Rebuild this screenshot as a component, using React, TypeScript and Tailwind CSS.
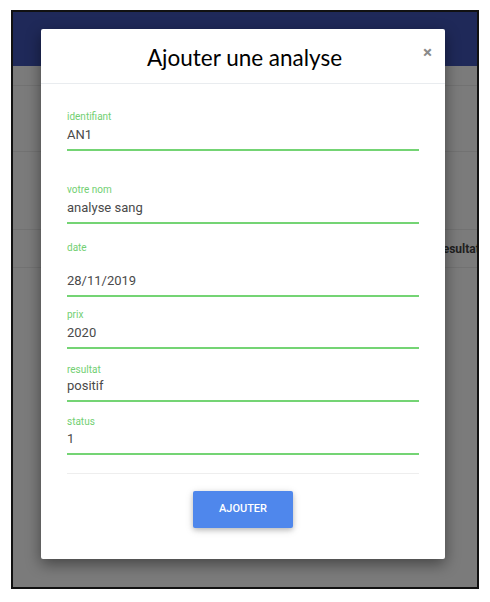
import React from 'react';

type FieldProps = {
    label: string;
    value: string;
    top: string;
    gap: string;
};

function Field({ label, value, top, gap }: FieldProps) {
    return (
        <div className={top}>
            <div className="text-[10px] leading-[12px] text-[#72cf72]">{label}</div>
            <div className={`${gap} text-[13px] leading-[18px] text-[#4a4a4a] pb-[5px] border-b-2 border-[#74d474]`}>
                {value}
            </div>
        </div>
    );
}

export default function App() {
    return (
        <div className="relative w-[490px] h-[602px] bg-white font-['Roboto',sans-serif]">
            {/* page behind the overlay */}
            <div className="absolute left-[11px] top-[10px] w-[468px] h-[579px] border-2 border-[#111] bg-[#7b7b7b] overflow-hidden">
                <div className="h-[54px] bg-[#1f2959]" />
                <div className="h-[20px] border-b border-[#727272]" />
                <div className="h-[66px] border-b border-[#727272]" />
                <div className="h-[78px] border-b border-[#727272]" />
                <div className="h-[38px] border-b border-[#727272] flex items-center pl-[422px] whitespace-nowrap text-[12px] font-bold text-[#1f1f1f]">
                    Resultat
                </div>
            </div>

            {/* modal */}
            <div className="absolute left-[41px] top-[29px] w-[404px] h-[530px] bg-white rounded-[2px] shadow-[0_5px_15px_rgba(0,0,0,0.45)]">
                <div className="relative h-[55px] border-b border-[#e9ecef] flex items-center justify-center">
                    <h2 className="text-[22.5px] text-black font-['Lato',sans-serif] pt-[3px] pl-[3px]">Ajouter une analyse</h2>
                    <span className="absolute right-[13px] top-[11px] text-[17px] font-bold text-[#8a8a8a]">×</span>
                </div>

                <div className="px-[26px]">
                    <Field label="identifiant" value="AN1" top="mt-[27px]" gap="mt-[3px]" />
                    <Field label="votre nom" value="analyse sang" top="mt-[33px]" gap="mt-[3px]" />
                    <Field label="date" value="28/11/2019" top="mt-[18px]" gap="mt-[18px]" />
                    <Field label="prix" value="2020" top="mt-[12px]" gap="mt-[3px]" />
                    <Field label="resultat" value="positif" top="mt-[15px]" gap="mt-[1px]" />
                    <Field label="status" value="1" top="mt-[14px]" gap="mt-[2px]" />

                    <div className="mt-[18px] border-t border-[#eeeeee]" />

                    <div className="flex justify-center mt-[17px]">
                        <button className="w-[100px] h-[37px] bg-[#4f87ec] text-white text-[11px] font-medium rounded-[2px] shadow-[0_2px_5px_rgba(0,0,0,0.2),0_2px_10px_rgba(0,0,0,0.12)]">
                            AJOUTER
                        </button>
                    </div>
                </div>
            </div>
        </div>
    );
}
